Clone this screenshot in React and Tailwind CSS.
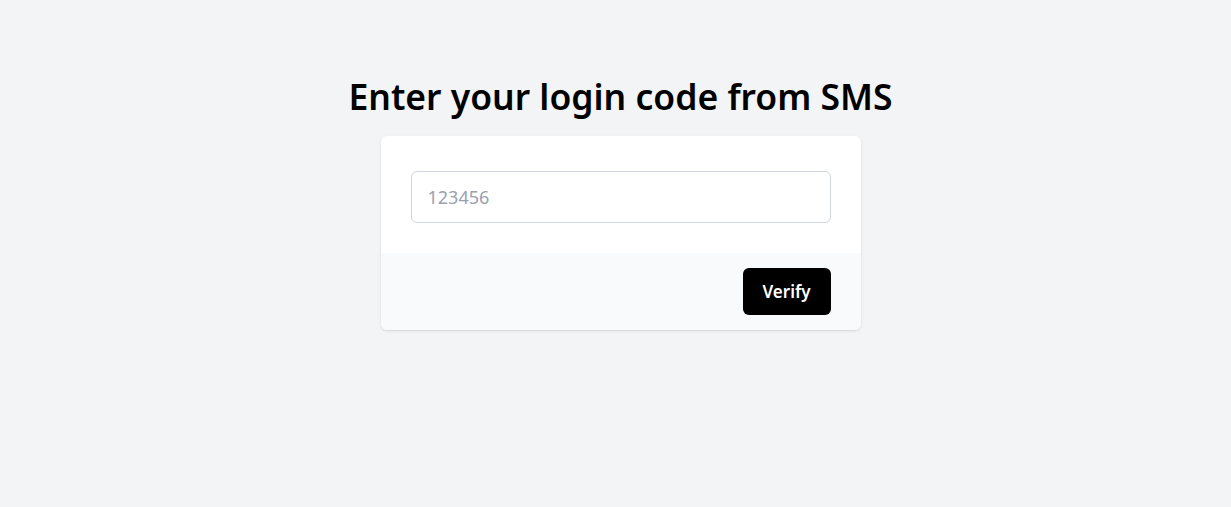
import React from 'react';

const App = () => {
  return (
    <div className="min-h-screen w-full bg-gray-100 flex flex-col items-center pt-[74px] pl-[10px] font-['Noto_Sans',sans-serif]">
      <h1 className="text-[35.5px] leading-[44px] font-semibold text-black">Enter your login code from SMS</h1>
      <div className="mt-[18px] w-[480px] bg-white rounded-md shadow-sm overflow-hidden">
        <div className="px-[30px] pt-[35px] pb-[30px]">
          <input
            type="text"
            placeholder="123456"
            className="w-full h-[52px] px-4 rounded-md border border-gray-300 text-[18px] text-gray-900 placeholder:text-gray-400 outline-none"
          />
        </div>
        <div className="bg-gray-50 px-[30px] py-[15px] flex justify-end">
          <button className="w-[88px] h-[47px] bg-black text-white rounded-md font-semibold text-[17px]">
            Verify
          </button>
        </div>
      </div>
    </div>
  );
};

export default App;
